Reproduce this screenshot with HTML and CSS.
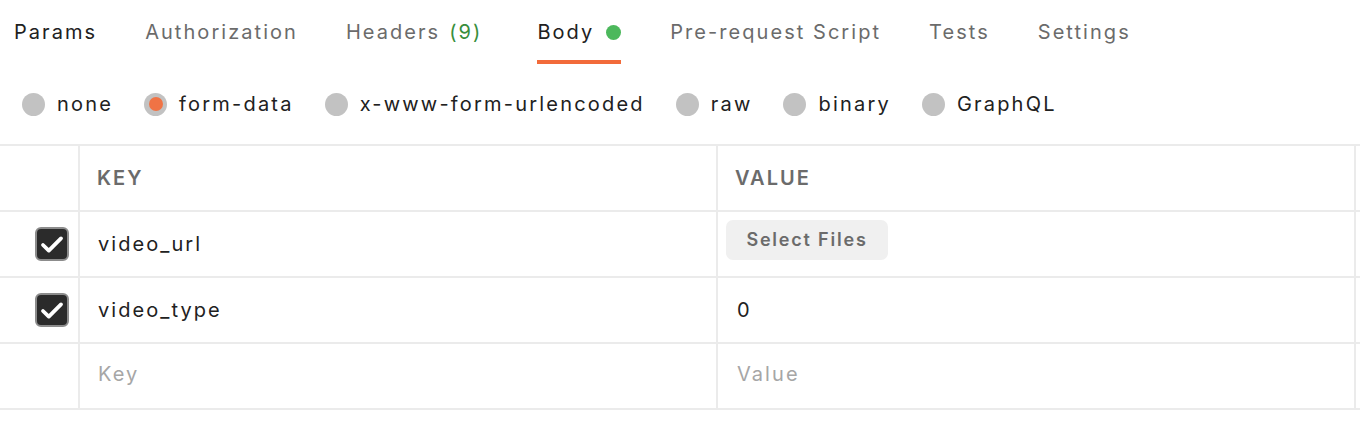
FILE: index.html
```html
<!DOCTYPE html>
<html lang="en">
<head>
<meta charset="utf-8">
<title>Body - form-data</title>
<link rel="stylesheet" href="styles.css">
</head>
<body>
<nav class="tabs">
  <div class="tab tab-dark">Params</div>
  <div class="tab">Authorization</div>
  <div class="tab tab-headers">Headers <span class="count">(9)</span></div>
  <div class="tab tab-dark tab-active">Body <span class="dot"></span></div>
  <div class="tab">Pre-request Script</div>
  <div class="tab">Tests</div>
  <div class="tab">Settings</div>
</nav>
<div class="radios">
  <label class="radio"><span class="circle"></span>none</label>
  <label class="radio"><span class="circle circle-on"></span>form-data</label>
  <label class="radio"><span class="circle"></span>x-www-form-urlencoded</label>
  <label class="radio"><span class="circle"></span>raw</label>
  <label class="radio"><span class="circle"></span>binary</label>
  <label class="radio"><span class="circle"></span>GraphQL</label>
</div>
<div class="table">
  <div class="row row-head">
    <div class="cell cell-check"></div>
    <div class="cell cell-key">KEY</div>
    <div class="cell cell-val">VALUE</div>
    <div class="cell-end"></div>
  </div>
  <div class="row">
    <div class="cell cell-check"><span class="check"><svg viewBox="0 0 24 24" width="24" height="24"><path d="M3 13l5.8 5.6L21 6.4" fill="none" stroke="#fff" stroke-width="3.8" stroke-linecap="round" stroke-linejoin="round"/></svg></span></div>
    <div class="cell cell-key">video_url</div>
    <div class="cell cell-val cell-btn"><button class="select-btn">Select Files</button></div>
    <div class="cell-end"></div>
  </div>
  <div class="row">
    <div class="cell cell-check"><span class="check"><svg viewBox="0 0 24 24" width="24" height="24"><path d="M3 13l5.8 5.6L21 6.4" fill="none" stroke="#fff" stroke-width="3.8" stroke-linecap="round" stroke-linejoin="round"/></svg></span></div>
    <div class="cell cell-key">video_type</div>
    <div class="cell cell-val">0</div>
    <div class="cell-end"></div>
  </div>
  <div class="row row-new">
    <div class="cell cell-check"></div>
    <div class="cell cell-key placeholder">Key</div>
    <div class="cell cell-val placeholder">Value</div>
    <div class="cell-end"></div>
  </div>
</div>
</body>
</html>
```
FILE: styles.css
```css
* { box-sizing: border-box; }
html, body { margin: 0; padding: 0; background: #fff; }
body {
  font-family: Inter, "Noto Sans", sans-serif;
  font-size: 20px;
  letter-spacing: 2.05px;
  color: #212121;
}
.tabs {
  display: flex;
  gap: 48px;
  padding-left: 14px;
  height: 64px;
}
.tab {
  display: flex;
  align-items: flex-start;
  gap: 10px;
  padding-top: 20px;
  height: 64px;
  line-height: 24px;
  border-bottom: 4px solid transparent;
  color: #6b6b6b;
  white-space: nowrap;
}
.tab-dark { color: #212121; }
.tab-headers { margin-right: 7px; }
.tab-active { border-bottom-color: #f26b3a; gap: 12px; margin-right: 1px; }
.count { color: #388e3c; margin-left: -1px; }
.dot {
  width: 15px; height: 15px;
  border-radius: 50%;
  background: #4cb85c;
  margin-top: 5px;
}
.radios {
  display: flex;
  align-items: center;
  height: 80px;
  padding-left: 22px;
  gap: 31px;
}
.radio {
  display: flex;
  align-items: center;
  gap: 12px;
  line-height: 24px;
  letter-spacing: 2.2px;
  color: #212121;
}
.circle {
  width: 23px; height: 23px;
  border-radius: 50%;
  background: #c2c2c2;
  display: flex;
  align-items: center;
  justify-content: center;
}
.circle-on::after {
  content: "";
  width: 14px; height: 14px;
  border-radius: 50%;
  background: #f07345;
}
.table { border-top: 2px solid #ebebeb; }
.row {
  display: grid;
  grid-template-columns: 80px 638px 638px 1fr;
  height: 66px;
  border-bottom: 2px solid #ebebeb;
}
.cell {
  border-right: 2px solid #ebebeb;
  display: flex;
  align-items: center;
  line-height: 24px;
}
.cell-check { justify-content: flex-end; padding-right: 9px; }
.cell-key { padding-left: 18px; }
.cell-val { padding-left: 19px; }
.cell-btn { padding-left: 8px; padding-top: 8px; align-items: flex-start; }
.row-head .cell { font-weight: 600; color: #6b6b6b; }
.row-head .cell-key { padding-left: 17px; }
.row-head .cell-val { padding-left: 17px; }
.row-new .cell { padding-bottom: 4px; }
.placeholder { color: #a6a6a6; }
.check {
  width: 34px; height: 34px;
  border-radius: 6px;
  background: #2b2b2b;
  border: 2px solid #8c8c8c;
  display: flex;
  align-items: center;
  justify-content: center;
}
.select-btn {
  font-family: inherit;
  font-size: 18px;
  letter-spacing: 1.8px;
  font-weight: 600;
  color: #6b6b6b;
  background: #f0f0f0;
  border: none;
  border-radius: 7px;
  width: 162px;
  height: 40px;
  padding: 0;
  line-height: 24px;
}
```
